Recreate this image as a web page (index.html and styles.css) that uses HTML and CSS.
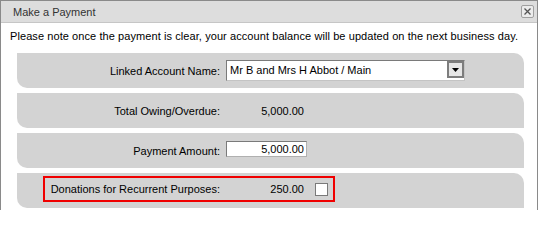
FILE: index.html
```html
<!DOCTYPE html>
<html>
<head>
<meta charset="utf-8">
<title>Make a Payment</title>
<link rel="stylesheet" href="styles.css">
</head>
<body>
<div class="dialog">
  <div class="titlebar">
    <span class="title">Make a Payment</span>
    <span class="close" title="Close">
      <svg width="7" height="7" viewBox="0 0 7 7"><path d="M0.5 0.5 L6.5 6.5 M6.5 0.5 L0.5 6.5" stroke="#555" stroke-width="1.3" fill="none"/></svg>
    </span>
  </div>
  <p class="note">Please note once the payment is clear, your account balance will be updated on the next business day.</p>
  <div class="rows">
    <div class="row">
      <span class="label">Linked Account Name:</span>
      <div class="select">
        <span class="select-text">Mr B and Mrs H Abbot / Main</span>
        <span class="select-btn">
          <svg width="7" height="4" viewBox="0 0 7 4"><path d="M0 0 H7 L3.5 4 Z" fill="#000"/></svg>
        </span>
      </div>
    </div>
    <div class="row">
      <span class="label">Total Owing/Overdue:</span>
      <span class="value">5,000.00</span>
    </div>
    <div class="row">
      <span class="label">Payment Amount:</span>
      <input class="amount" type="text" value="5,000.00">
    </div>
    <div class="row row-top">
      <div class="highlight">
        <span class="label label-inner">Donations for Recurrent Purposes:</span>
        <span class="value">250.00</span>
        <span class="checkbox"></span>
      </div>
    </div>
  </div>
</div>
</body>
</html>
```
FILE: styles.css
```css
html, body {
  margin: 0;
  padding: 0;
  background: #ffffff;
}
body {
  font-family: "Liberation Sans", Arial, sans-serif;
  font-size: 11px;
  color: #000;
}
.dialog {
  width: 536px;
  height: 209px;
  border: 1px solid #8a8a8a;
  border-bottom: 0;
  background: #fff;
  overflow: hidden;
}
.titlebar {
  height: 21px;
  background: #dddddd;
  border-bottom: 1px solid #c6c6c6;
  display: flex;
  align-items: center;
  justify-content: space-between;
  padding: 0 3px 0 12px;
}
.title {
  color: #333;
  font-size: 11px;
}
.close {
  width: 11px;
  height: 11px;
  border: 1px solid #a0a0a0;
  border-radius: 2px;
  background: #ececec;
  display: flex;
  align-items: center;
  justify-content: center;
}
.note {
  margin: 7px 0 10px 9px;
  line-height: 13px;
  letter-spacing: 0.08px;
}
.rows {
  display: flex;
  flex-direction: column;
  gap: 5px;
  margin-left: 16px;
  width: 507px;
}
.row {
  height: 35px;
  background: #d3d3d3;
  border-radius: 0 10px 0 10px;
  display: flex;
  align-items: center;
}
.row-top {
  align-items: flex-start;
  padding-top: 3px;
  box-sizing: border-box;
}
.label {
  width: 203px;
  text-align: right;
  flex: none;
  margin-right: 6px;
}
.label-inner {
  width: 175px;
}
.value {
  width: 78px;
  padding-right: 3px;
  text-align: right;
  flex: none;
}
.select {
  width: 237px;
  height: 19px;
  border: 1px solid;
  border-color: #7a7a7a #c4c4c4 #c4c4c4 #7a7a7a;
  background: #fff;
  display: flex;
  justify-content: space-between;
  align-items: flex-start;
  box-sizing: content-box;
}
.select-text {
  padding-left: 3px;
  line-height: 19px;
}
.select-btn {
  width: 13px;
  height: 13px;
  border: 2px solid #7d7d7d;
  background: #e6e6e6;
  display: flex;
  align-items: center;
  justify-content: center;
}
.amount {
  appearance: none;
  -webkit-appearance: none;
  margin: 0;
  width: 81px;
  height: 16px;
  box-sizing: border-box;
  border: 1px solid;
  border-color: #7a7a7a #b0b0b0 #b0b0b0 #7a7a7a;
  background: #fff;
  font-family: "Liberation Sans", Arial, sans-serif;
  font-size: 11px;
  color: #000;
  text-align: right;
  padding: 0 2px 0 0;
  margin-top: -3px;
}
.highlight {
  margin-left: 26px;
  width: 288px;
  height: 22px;
  border: 2px solid #f00000;
  display: flex;
  align-items: center;
}
.checkbox {
  width: 11px;
  height: 11px;
  border: 1px solid #7a7a7a;
  background: #fff;
  margin-left: 8px;
}
```
